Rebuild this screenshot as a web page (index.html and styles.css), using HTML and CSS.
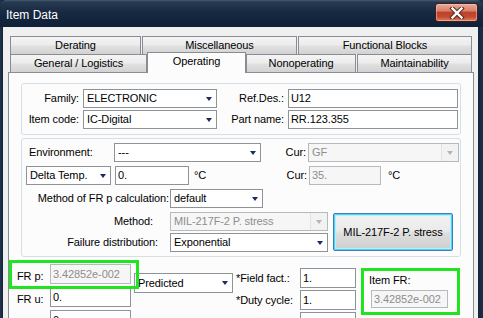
FILE: index.html
```html
<!DOCTYPE html>
<html>
<head>
<meta charset="utf-8">
<link rel="stylesheet" href="styles.css">
</head>
<body>
<div class="win">
  <div class="titlebar">
    <span class="title">Item Data</span>
    <div class="close">
      <svg width="16" height="12" viewBox="0 0 16 12"><path d="M3.5 1.5 L12.5 10.5 M12.5 1.5 L3.5 10.5" stroke="#5a2a22" stroke-width="4.4" stroke-linecap="square"/><path d="M3.5 1.5 L12.5 10.5 M12.5 1.5 L3.5 10.5" stroke="#ffffff" stroke-width="2.4" stroke-linecap="square"/></svg>
    </div>
  </div>
  <div class="client">
    <div class="tabs">
      <div class="tabrow back">
        <div class="tab w-der">Derating</div>
        <div class="tab w-misc">Miscellaneous</div>
        <div class="tab w-func">Functional Blocks</div>
      </div>
      <div class="tabrow front">
        <div class="tab w-gen">General / Logistics</div>
        <div class="tab sel w-op">Operating</div>
        <div class="tab w-nonop">Nonoperating</div>
        <div class="tab w-maint">Maintainability</div>
      </div>
    </div>
    <div class="panel">
      <div class="group g1">
        <div class="lbl r">Family:</div>
        <div class="combo"><span class="v">ELECTRONIC</span></div>
        <div class="lbl r">Ref.Des.:</div>
        <div class="edit">U12</div>
        <div class="lbl r">Item code:</div>
        <div class="combo"><span class="v">IC-Digital</span></div>
        <div class="lbl r">Part name:</div>
        <div class="edit">RR.123.355</div>
      </div>

      <div class="group g2">
        <div class="row row-a">
          <div class="lbl l-env">Environment:</div>
          <div class="combo w-env"><span class="v">---</span></div>
          <div class="lbl r l-cur1">Cur:</div>
          <div class="combo dis w-gf"><span class="v">GF</span><span class="dbtn"></span></div>
        </div>
        <div class="row row-b">
          <div class="combo w-delta"><span class="v">Delta Temp.</span></div>
          <div class="edit w-temp">0.</div>
          <div class="unit u1">°C</div>
          <div class="lbl r l-cur2">Cur:</div>
          <div class="edit dis w-cur">35.</div>
          <div class="unit u2">°C</div>
        </div>
        <div class="row row-c">
          <div class="lbl r l-calc">Method of FR p calculation:</div>
          <div class="combo w-def"><span class="v">default</span></div>
        </div>
        <div class="row row-de">
          <div class="decol">
            <div class="drow">
              <div class="lbl r l-meth">Method:</div>
              <div class="combo dis w-meth"><span class="v">MIL-217F-2 P. stress</span><span class="dbtn"></span></div>
            </div>
            <div class="drow">
              <div class="lbl r l-fail">Failure distribution:</div>
              <div class="combo w-meth"><span class="v">Exponential</span></div>
            </div>
          </div>
          <div class="btn">MIL-217F-2 P. stress</div>
        </div>
      </div>

      <div class="bottom">
        <div class="col1">
          <div class="frow"><div class="lbl l-fr">FR p:</div><div class="edit dis w-fr">3.42852e-002</div></div>
          <div class="frow"><div class="lbl l-fr">FR u:</div><div class="edit w-fr">0.</div></div>
          <div class="frow"><div class="lbl l-fr">FR t:</div><div class="edit w-fr">0.</div></div>
        </div>
        <div class="col2">
          <div class="combo w-pred"><span class="v">Predicted</span></div>
        </div>
        <div class="col3">
          <div class="frow2"><div class="lbl l-fac">*Field fact.:</div><div class="edit w-fac">1.</div></div>
          <div class="frow2"><div class="lbl l-fac">*Duty cycle:</div><div class="edit w-fac">1.</div></div>
          <div class="frow2"><div class="lbl l-fac">Weight:</div><div class="edit w-fac">1.</div></div>
        </div>
        <div class="itemfr">
          <div class="ifr-lbl">Item FR:</div>
          <div class="edit dis w-ifr">3.42852e-002</div>
        </div>
      </div>

      <div class="hl hl-frp"></div>
    </div>
  </div>
</div>
</body>
</html>
```

FILE: styles.css
```css
* { box-sizing: border-box; margin: 0; padding: 0; }
html, body { width: 483px; height: 318px; overflow: hidden; }
body {
  background: #0f2036;
  font-family: "Liberation Sans", Arial, sans-serif;
  font-size: 11px;
  letter-spacing: -0.1px;
  color: #000;
}
.win {
  width: 483px;
  height: 318px;
  display: flex;
  flex-direction: column;
  background: linear-gradient(90deg, #22354d 0, #12243b 3px, #12243b 477px, #1c2f47 100%);
  overflow: hidden;
}
.titlebar {
  height: 27px;
  flex: none;
  display: flex;
  justify-content: space-between;
  align-items: flex-start;
  padding: 0 5px 0 6px;
  background: linear-gradient(#4a5b70 0, #263a52 2px, #172a42 45%, #0f2037 100%);
  border-radius: 6px 6px 0 0;
}
.title {
  color: #fff;
  font-size: 12px;
  letter-spacing: 0;
  line-height: 14px;
  margin-top: 8px;
}
.close {
  width: 43px;
  height: 19px;
  margin-top: 3px;
  border: 1px solid #40201b;
  border-radius: 3px;
  background: linear-gradient(#e8ab9a 0, #d88069 40%, #c0412a 50%, #c34a31 75%, #e0805f 100%);
  box-shadow: inset 0 0 0 1px rgba(255, 210, 200, 0.45);
  display: flex;
  align-items: center;
  justify-content: center;
}
.client {
  flex: 1;
  min-height: 0;
  margin: 0 5px 0 3px;
  background: #f0f0f0;
  padding: 9px 0 0 5px;
}

/* tabs */
.tabs { margin-left: 2px; }
.tabrow { display: flex; height: 18px; align-items: flex-start; }
.tabrow.back { gap: 1px; }
.tab {
  height: 18px;
  border: 1px solid #898c95;
  border-bottom: none;
  background: linear-gradient(#f4f4f4 0, #ececec 45%, #e0e0e0 55%, #d2d2d2 100%);
  text-align: center;
  line-height: 17px;
  white-space: nowrap;
}
.tab.sel {
  height: 21px;
  margin-top: -2px;
  background: #fcfcfc;
  position: relative;
  z-index: 1;
}
.w-der { width: 131px; }
.w-misc { width: 155px; }
.w-func { width: 174px; }
.w-gen { width: 137px; }
.w-op { width: 99px; }
.w-nonop { width: 110px; }
.w-maint { width: 115px; margin-left: 1px; }

/* panel */
.panel {
  position: relative;
  width: 466px;
  height: 260px;
  border: 1px solid #898c95;
  background: #fcfcfc;
  padding-top: 10px;
}
.group {
  width: 440px;
  margin-left: 12px;
  border: 1px solid #d5dfe5;
  border-radius: 3px;
}
.g1 {
  display: grid;
  grid-template-columns: 58px 134px 65px 170px;
  grid-auto-rows: 19px;
  column-gap: 3px;
  row-gap: 2px;
  padding: 5px 0;
}
.g2 {
  margin-top: 3px;
  padding: 4px 0;
}
.lbl { line-height: 19px; white-space: nowrap; }
.lbl.r { text-align: right; padding-right: 1px; }

.combo, .edit {
  height: 19px;
  border: 1px solid #8e9397;
  background: #fff;
  display: flex;
  align-items: center;
  white-space: nowrap;
  overflow: hidden;
}
.combo .v { flex: 1; padding-left: 3px; line-height: 17px; overflow: hidden; }
.combo::after {
  content: "";
  flex: none;
  margin-right: 4px;
  border-left: 3.5px solid transparent;
  border-right: 3.5px solid transparent;
  border-top: 4px solid #1b2a63;
}
.edit { padding-left: 2px; line-height: 17px; }
.dis {
  background: #f6f6f6;
  border-color: #b6babe;
  color: #8d8d8d;
}
.combo.dis::after { display: none; }
.dbtn {
  flex: none;
  width: 17px;
  height: 100%;
  border-left: 1px solid #e2e2e2;
  background: #f2f2f2;
  display: flex;
  align-items: center;
  justify-content: center;
}
.dbtn::after {
  content: "";
  border-left: 3.5px solid transparent;
  border-right: 3.5px solid transparent;
  border-top: 4px solid #b4b4b4;
}

.row { display: flex; height: 19px; }
.row-a { padding-left: 7px; }
.l-env { width: 85px; }
.w-env { width: 147px; }
.lbl.l-cur1 { width: 47px; padding-right: 2px; }
.w-gf { width: 151px; }

.row-b { margin-top: 4px; padding-left: 4px; }
.w-delta { width: 85px; }
.w-temp { width: 74px; margin-left: 4px; }
.unit { line-height: 19px; }
.u1 { width: 20px; padding-left: 5px; }
.lbl.l-cur2 { width: 100px; padding-right: 2px; }
.w-cur { width: 72px; }
.u2 { padding-left: 7px; }

.row-c { margin-top: 4px; }
.lbl.l-calc { width: 148px; }
.w-def { width: 93px; }

.row-de { margin-top: 4px; height: auto; }
.decol { display: flex; flex-direction: column; gap: 2px; }
.drow { display: flex; height: 19px; }
.lbl.l-meth { width: 148px; padding-right: 17px; }
.lbl.l-fail { width: 148px; padding-right: 12px; }
.w-meth { width: 158px; }
.btn {
  width: 120px;
  height: 38px;
  margin-left: 5px;
  margin-top: 1px;
  border: 1px solid #3c7fb1;
  border-radius: 2px;
  background: linear-gradient(#f2f2f2 0, #ebebeb 45%, #dddddd 55%, #cfcfcf 100%);
  box-shadow: inset 0 0 0 1px #52d2fb, inset 0 0 0 2px #b9ecfd;
  display: flex;
  align-items: center;
  justify-content: center;
  white-space: nowrap;
}

/* bottom section */
.bottom { display: flex; align-items: flex-start; padding-left: 8px; }
.col1 { margin-top: 7px; display: flex; flex-direction: column; gap: 3px; }
.frow { display: flex; height: 20px; }
.lbl.l-fr { width: 33px; line-height: 14px; padding-top: 5px; }
.w-fr { width: 81px; height: 20px; }
.col2 { margin-left: 3px; margin-top: 16px; }
.w-pred { width: 99px; height: 20px; }
.col3 { margin-left: 3px; margin-top: 11px; display: flex; flex-direction: column; gap: 2px; }
.frow2 { display: flex; height: 20px; }
.lbl.l-fac { width: 64px; line-height: 20px; }
.w-fac { width: 56px; height: 20px; }
.itemfr {
  margin-left: 5px;
  margin-top: 11px;
  width: 99px;
  height: 47px;
  border: 3px solid #1fe41f;
  padding: 2px 0 0 5px;
}
.ifr-lbl { line-height: 14px; height: 14px; }
.w-ifr { width: 77px; height: 18px; margin-top: 3px; margin-left: 2px; }

/* highlight annotation */
.hl {
  position: absolute;
  border: 3px solid #1fe41f;
}
.hl-frp { left: 0; top: 187px; width: 130px; height: 29px; }
```
